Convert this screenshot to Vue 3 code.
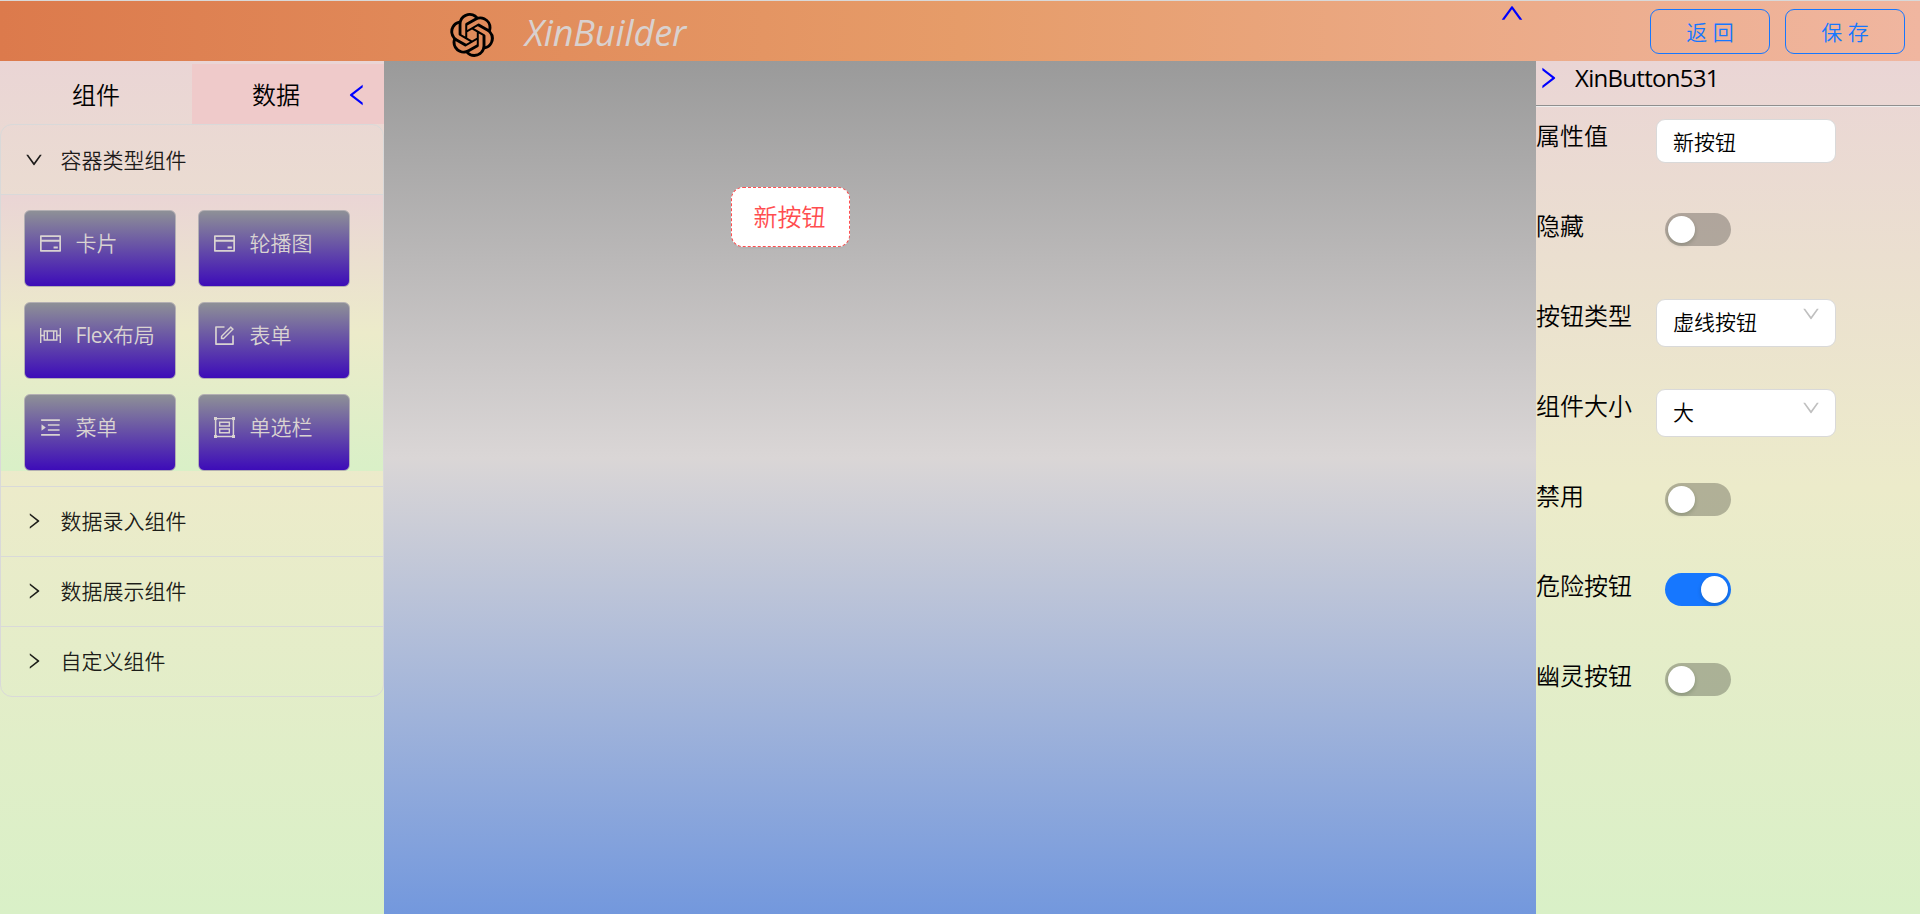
<script setup>
import { ref } from 'vue'

const paths = {
  down: 'M884 256h-75c-5.1 0-9.9 2.5-12.9 6.6L512 654.2 227.9 262.6c-3-4.1-7.8-6.6-12.9-6.6h-75c-6.5 0-10.3 7.4-6.5 12.7l352.6 486.1c12.8 17.6 39 17.6 51.7 0l352.6-486.1c3.9-5.3.1-12.7-6.4-12.7z',
  up: 'M890.5 755.3L537.9 269.2c-12.8-17.6-39-17.6-51.7 0L133.5 755.3A8 8 0 00140 768h75c5.1 0 9.9-2.5 12.9-6.6L512 369.8l284.1 391.6c3 4.1 7.8 6.6 12.9 6.6h75c6.5 0 10.3-7.4 6.5-12.7z',
  left: 'M724 218.3V141c0-6.7-7.7-10.4-12.9-6.3L260.3 486.8a31.86 31.86 0 000 50.3l450.8 352.1c5.3 4.1 12.9.4 12.9-6.3v-77.3c0-4.9-2.3-9.6-6.1-12.6l-360-281 360-281.1c3.8-3 6.1-7.7 6.1-12.6z',
  right: 'M765.7 486.8L314.9 134.7A7.97 7.97 0 00302 141v77.3c0 4.9 2.3 9.6 6.1 12.6l360 281.1-360 281.1c-3.9 3-6.1 7.7-6.1 12.6V883c0 6.7 7.7 10.4 12.9 6.3l450.8-352.1a31.96 31.96 0 000-50.4z',
  card: 'M928 160H96c-17.7 0-32 14.3-32 32v640c0 17.7 14.3 32 32 32h832c17.7 0 32-14.3 32-32V192c0-17.7-14.3-32-32-32zm-792 72h752v120H136V232zm752 560H136V440h752v352zm-237-64h165c4.4 0 8-3.6 8-8v-72c0-4.4-3.6-8-8-8H651c-4.4 0-8 3.6-8 8v72c0 4.4 3.6 8 8 8z',
  form: 'M904 512h-56c-4.4 0-8 3.6-8 8v320H184V184h320c4.4 0 8-3.6 8-8v-56c0-4.4-3.6-8-8-8H144c-17.7 0-32 14.3-32 32v736c0 17.7 14.3 32 32 32h736c17.7 0 32-14.3 32-32V520c0-4.4-3.6-8-8-8z M355.9 534.9L354 653.8c-.1 8.9 7.1 16.2 16 16.2h.4l118-2.9c2-.1 4-.9 5.4-2.3l415.9-415c3.1-3.1 3.1-8.2 0-11.3L785.4 114.3c-1.6-1.6-3.6-2.3-5.7-2.3s-4.1.8-5.7 2.3l-415.8 415a8.3 8.3 0 00-2.3 5.6zm63.5 23.6L779.7 199l45.2 45.1-360.5 359.7-45.7 1.1.7-46.4z',
  menu: 'M408 442h480c4.4 0 8-3.6 8-8v-56c0-4.4-3.6-8-8-8H408c-4.4 0-8 3.6-8 8v56c0 4.4 3.6 8 8 8zm-8 204c0 4.4 3.6 8 8 8h480c4.4 0 8-3.6 8-8v-56c0-4.4-3.6-8-8-8H408c-4.4 0-8 3.6-8 8v56zm504-486H120c-4.4 0-8 3.6-8 8v56c0 4.4 3.6 8 8 8h784c4.4 0 8-3.6 8-8v-56c0-4.4-3.6-8-8-8zm0 632H120c-4.4 0-8 3.6-8 8v56c0 4.4 3.6 8 8 8h784c4.4 0 8-3.6 8-8v-56c0-4.4-3.6-8-8-8zM142.4 642.1L298.7 519a8.84 8.84 0 000-13.9L142.4 381.9c-5.8-4.6-14.4-.5-14.4 6.9v246.3a8.9 8.9 0 0014.4 7z',
  flex: 'M64 192h60v290h90V290h596v192h90V192h60v640h-60V542h-90v192H214V542h-90v290H64zM274 350v324h72V350zM406 350v324h212V350zM678 350v324h72V350z',
  group: 'M64 64h128v40h640V64h128v128h-36v640h36v128H832v-36H192v36H64V832h36V192H64zM164 192v640h28v28h640v-28h28V192h-28v-28H192v28zM276 260h472v216H276zM336 320v96h352v-96zM276 548h472v216H276zM336 608v96h352v-96z',
}

const widgets = ref([
  { label: '卡片', icon: 'card' },
  { label: '轮播图', icon: 'card' },
  { latin: 'Flex', label: '布局', icon: 'flex' },
  { label: '表单', icon: 'form' },
  { label: '菜单', icon: 'menu' },
  { label: '单选栏', icon: 'group' },
])
const groups = ref(['数据录入组件', '数据展示组件', '自定义组件'])
const fields = ref([
  { label: '属性值', type: 'input', value: '新按钮' },
  { label: '隐藏', type: 'switch', on: false },
  { label: '按钮类型', type: 'select', value: '虚线按钮' },
  { label: '组件大小', type: 'select', value: '大', low: true },
  { label: '禁用', type: 'switch', on: false },
  { label: '危险按钮', type: 'switch', on: true },
  { label: '幽灵按钮', type: 'switch', on: false },
])
</script>

<template>
  <div class="app">
    <header class="header">
      <div class="brand">
        <svg class="logo" viewBox="0 0 24 24"><path d="M22.2819 9.8211a5.9847 5.9847 0 0 0-.5157-4.9108 6.0462 6.0462 0 0 0-6.5098-2.9A6.0651 6.0651 0 0 0 4.9807 4.1818a5.9847 5.9847 0 0 0-3.9977 2.9 6.0462 6.0462 0 0 0 .7427 7.0966 5.98 5.98 0 0 0 .511 4.9107 6.051 6.051 0 0 0 6.5146 2.9001A5.9847 5.9847 0 0 0 13.2599 24a6.0557 6.0557 0 0 0 5.7718-4.2058 5.9894 5.9894 0 0 0 3.9977-2.9001 6.0557 6.0557 0 0 0-.7475-7.0729zm-9.022 12.6081a4.4755 4.4755 0 0 1-2.8764-1.0408l.1419-.0804 4.7783-2.7582a.7948.7948 0 0 0 .3927-.6813v-6.7369l2.02 1.1686a.071.071 0 0 1 .038.052v5.5826a4.504 4.504 0 0 1-4.4945 4.4944zm-9.6607-4.1254a4.4708 4.4708 0 0 1-.5346-3.0137l.142.0852 4.783 2.7582a.7712.7712 0 0 0 .7806 0l5.8428-3.3685v2.3324a.0804.0804 0 0 1-.0332.0615L9.74 19.9502a4.4992 4.4992 0 0 1-6.1408-1.6464zM2.3408 7.8956a4.485 4.485 0 0 1 2.3655-1.9728V11.6a.7664.7664 0 0 0 .3879.6765l5.8144 3.3543-2.0201 1.1685a.0757.0757 0 0 1-.071 0l-4.8303-2.7865A4.504 4.504 0 0 1 2.3408 7.872zm16.5963 3.8558L13.1038 8.364 15.1192 7.2a.0757.0757 0 0 1 .071 0l4.8303 2.7913a4.4944 4.4944 0 0 1-.6765 8.1042v-5.6772a.79.79 0 0 0-.407-.667zm2.0107-3.0231l-.142-.0852-4.7735-2.7818a.7759.7759 0 0 0-.7854 0L9.409 9.2297V6.8974a.0662.0662 0 0 1 .0284-.0615l4.8303-2.7866a4.4992 4.4992 0 0 1 6.6802 4.66zM8.3065 12.863l-2.02-1.1638a.0804.0804 0 0 1-.038-.0567V6.0742a4.4992 4.4992 0 0 1 7.3757-3.4537l-.142.0805L8.704 5.459a.7948.7948 0 0 0-.3927.6813zm1.0976-2.3654l2.602-1.4998 2.6069 1.4998v2.9994l-2.5974 1.4997-2.6067-1.4997Z" /></svg>
        <span class="title">XinBuilder</span>
      </div>
      <svg class="toggle up" viewBox="64 64 896 896"><path :d="paths.up" /></svg>
      <div class="actions">
        <button class="action">返 回</button>
        <button class="action">保 存</button>
      </div>
    </header>

    <main class="body">
      <aside class="side">
        <div class="tabs">
          <div class="tab">组件</div>
          <div class="tab active">
            <span class="tab-text">数据</span>
            <svg class="toggle" viewBox="64 64 896 896"><path :d="paths.left" /></svg>
          </div>
        </div>
        <div class="collapse">
          <div class="panel-head first">
            <svg class="caret" viewBox="64 64 896 896"><path :d="paths.down" /></svg>
            <span>容器类型组件</span>
          </div>
          <div class="panel-body">
            <div class="widgets">
              <div v-for="w in widgets" :key="w.label" class="widget">
                <svg class="widget-icon" viewBox="64 64 896 896"><path fill-rule="evenodd" :d="paths[w.icon]" /></svg>
                <span><span v-if="w.latin" class="latin">{{ w.latin }}</span>{{ w.label }}</span>
              </div>
            </div>
          </div>
          <div v-for="g in groups" :key="g" class="panel-head">
            <svg class="caret" viewBox="64 64 896 896"><path :d="paths.right" /></svg>
            <span>{{ g }}</span>
          </div>
        </div>
      </aside>

      <section class="canvas">
        <button class="placed">新按钮</button>
      </section>

      <aside class="props">
        <div class="props-head">
          <svg class="toggle" viewBox="64 64 896 896"><path :d="paths.right" /></svg>
          <span class="props-name">XinButton531</span>
        </div>
        <div v-for="f in fields" :key="f.label" class="field">
          <div class="label">{{ f.label }}</div>
          <div v-if="f.type === 'input'" class="input">{{ f.value }}</div>
          <div v-else-if="f.type === 'select'" class="select">
            <span>{{ f.value }}</span>
            <svg class="arrow" :class="{ low: f.low }" viewBox="64 64 896 896"><path :d="paths.down" /></svg>
          </div>
          <div v-else class="switch" :class="{ on: f.on }"><i class="knob"></i></div>
        </div>
      </aside>
    </main>
  </div>
</template>

<style>
body {
  margin: 0;
  overflow: hidden;
}
</style>

<style scoped>
.app {
  box-sizing: border-box;
  width: 1920px;
  height: 914px;
  display: flex;
  flex-direction: column;
  border-top: 1px solid #d9d9d9;
  font-family: "Open Sans", "Noto Sans CJK SC", sans-serif;
  font-weight: 350;
  color: #000;
}
svg {
  display: block;
  flex: none;
  fill: currentColor;
}
button {
  font: inherit;
  margin: 0;
  padding: 0;
}
.toggle {
  width: 24px;
  height: 24px;
  color: #0000ff;
}
.header {
  height: 60px;
  flex: none;
  display: flex;
  background: linear-gradient(to right, #dc7a4c, #e69c69 50%, #f0b6a0);
}
.brand {
  width: 1050px;
  padding-left: 450px;
  display: flex;
  align-items: center;
}
.logo {
  width: 44px;
  height: 44px;
  margin-top: 7px;
}
.title {
  margin-left: 31px;
  margin-top: 3px;
  font-size: 36px;
  line-height: 48px;
  letter-spacing: -0.1px;
  font-style: italic;
  font-weight: 400;
  color: #d9d1cf;
}
.actions {
  display: flex;
  gap: 15px;
  margin: 8px 0 0 126px;
}
.action {
  box-sizing: border-box;
  width: 120px;
  height: 45px;
  border: 1px solid #1677ff;
  border-radius: 9px;
  background: transparent;
  color: #1677ff;
  font-size: 21px;
  line-height: 41px;
  padding-top: 2px;
}
.body {
  flex: 1;
  display: flex;
  min-height: 0;
}
.side,
.props {
  width: 384px;
  flex: none;
  background: linear-gradient(#ead5d5, #ecebca 50%, #d9f0c7);
}
.tabs {
  display: flex;
  height: 60px;
  padding-top: 3px;
}
.tab {
  box-sizing: border-box;
  width: 192px;
  display: flex;
  align-items: center;
  justify-content: center;
  font-size: 24px;
  line-height: 60px;
  padding-top: 2px;
}
.active {
  background: #efcaca;
}
.active .tab-text {
  margin-left: 45px;
}
.active .toggle {
  margin: 0 0 0 45px;
}
.collapse {
  box-sizing: border-box;
  border: 1px solid #d9d9d9;
  border-radius: 12px;
}
.panel-head {
  box-sizing: border-box;
  height: 70px;
  display: flex;
  align-items: center;
  gap: 17.5px;
  padding: 0 0 1px 24px;
  border-top: 1px solid #d9d9d9;
  font-size: 21px;
  line-height: 32px;
  color: rgba(0, 0, 0, 0.88);
}
.first {
  height: 69px;
  padding-bottom: 0;
  border-top: 0;
}
.caret {
  width: 18px;
  height: 18px;
}
.panel-body {
  border-top: 1px solid #d9d9d9;
  padding-bottom: 15px;
}
.widgets {
  box-sizing: border-box;
  height: 276px;
  display: grid;
  grid-template-columns: 152px 152px;
  grid-auto-rows: 77px;
  gap: 15px 22px;
  padding: 15px 0 0 23px;
  background: linear-gradient(#ead5d5, #ecebca 50%, #d9f0c7);
}
.widget {
  box-sizing: border-box;
  display: flex;
  align-items: center;
  gap: 14.5px;
  padding: 0 0 11px 15px;
  border: 1px solid #b3afb3;
  border-radius: 6px;
  background: linear-gradient(#8f9296, #3c0ab9) border-box;
  font-size: 21px;
  line-height: 32px;
  color: #d9d3d1;
}
.latin {
  font-weight: 400;
  letter-spacing: -0.4px;
}
.widget-icon {
  width: 21px;
  height: 21px;
}
.canvas {
  flex: 1;
  background: linear-gradient(#9a9a9a, #dad6d6 46.5%, #7398dd);
}
.placed {
  box-sizing: border-box;
  display: block;
  width: 119px;
  height: 60px;
  margin: 126px 0 0 347px;
  padding-right: 2px;
  border: 1px dashed #ff4d4f;
  border-radius: 12px;
  background: #fff;
  color: #ff4d4f;
  font-size: 24px;
  line-height: 58px;
  box-shadow: 0 2px 0 rgba(0, 0, 0, 0.02);
}
.props-head {
  box-sizing: border-box;
  height: 46px;
  display: flex;
  padding-top: 5px;
  margin-bottom: -15px;
  border-bottom: 1px solid #eee;
  box-shadow: inset 0 -1px 0 #8f8f8f;
}
.props-name {
  margin: -2px 0 0 15px;
  font-size: 24px;
  line-height: 28px;
  font-weight: 400;
  letter-spacing: -0.7px;
}
.field {
  height: 90px;
  display: flex;
  align-items: flex-start;
}
.label {
  width: 120px;
  margin-top: 27px;
  font-size: 24px;
  line-height: 34px;
  white-space: nowrap;
}
.input,
.select {
  box-sizing: border-box;
  width: 180px;
  height: 44px;
  margin-top: 27px;
  padding: 0 15px 0 16px;
  border: 1px solid #d9d9d9;
  border-radius: 9px;
  background: #fff;
  font-size: 21px;
  line-height: 44px;
}
.select {
  height: 48px;
  display: flex;
  justify-content: space-between;
}
.arrow {
  width: 18px;
  height: 18px;
  margin-top: 5px;
  color: #bfbfbf;
}
.arrow.low {
  margin-top: 9px;
}
.switch {
  box-sizing: border-box;
  display: flex;
  width: 66px;
  height: 33px;
  margin: 31px 0 0 9px;
  padding: 3px;
  border-radius: 17px;
  background: rgba(0, 0, 0, 0.25);
}
.switch.on {
  justify-content: flex-end;
  background: #1677ff;
}
.knob {
  width: 27px;
  height: 27px;
  border-radius: 50%;
  background: #fff;
  box-shadow: 0 2px 4px rgba(0, 35, 11, 0.2);
}
</style>
